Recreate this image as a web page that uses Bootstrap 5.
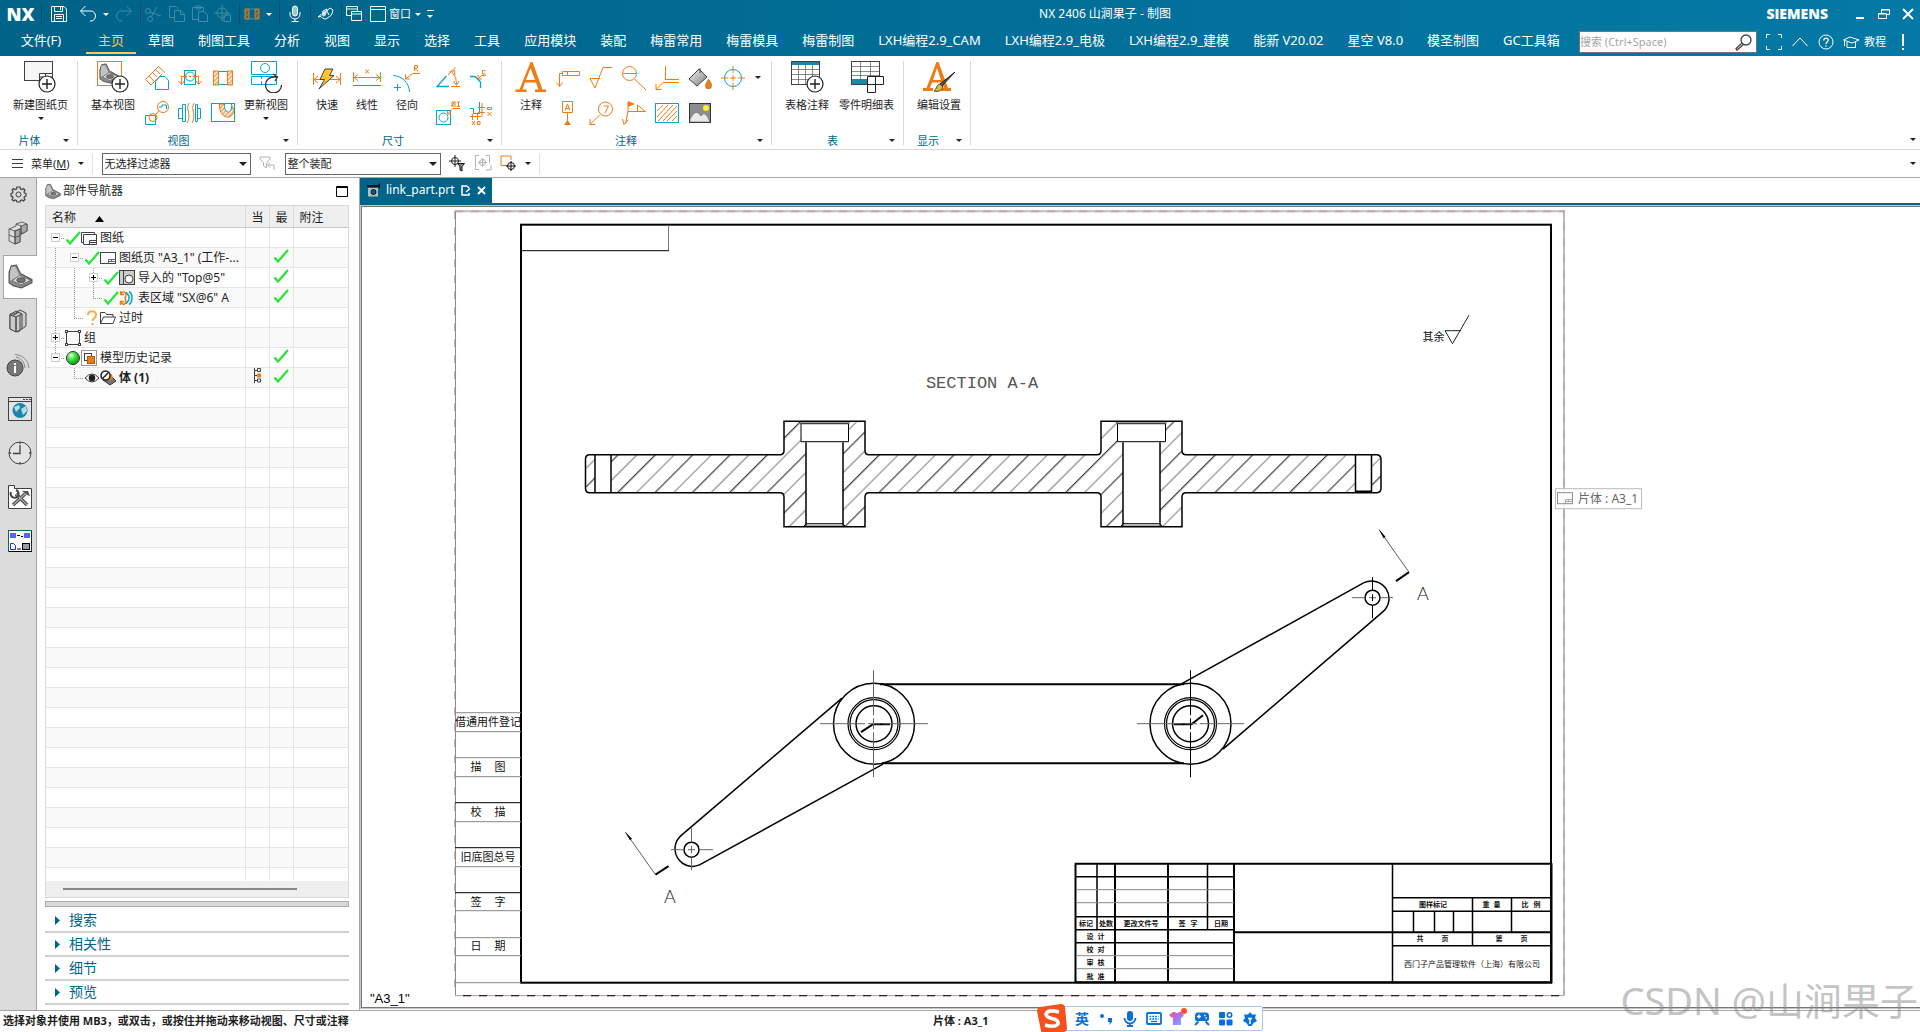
<!DOCTYPE html>
<html lang="zh-CN">
<head>
<meta charset="utf-8">
<meta name="viewport" content="width=device-width, initial-scale=1">
<title>NX 2406 山涧果子 - 制图</title>
<link href="https://cdn.jsdelivr.net/npm/bootstrap@5.3.0/dist/css/bootstrap.min.css" rel="stylesheet">
<style>
:root{--or:#ee7b14;--cy:#00a6cc;--dk:#404040;--teal:#006489;--ln:#d9d9d9}
body{font-family:"Noto Sans","Noto Sans CJK SC",sans-serif;font-size:11px;line-height:16px;color:#1e1e1e;background:#fff;height:100vh;overflow:hidden}
.btn{--bs-btn-font-size:11px;--bs-btn-line-height:16px;--bs-btn-padding-x:0;--bs-btn-padding-y:0;--bs-btn-border-radius:0;--bs-btn-border-width:0;--bs-btn-color:#1e1e1e;display:inline-flex;align-items:center;justify-content:center;flex:none;white-space:nowrap}
svg{flex:none;display:block}
.ln{fill:none;stroke-width:1}
.o{stroke:var(--or)}.c{stroke:var(--cy)}.k{stroke:var(--dk)}.w{stroke:#fff}
.fo{fill:var(--or)}.fk{fill:#333}.fw{fill:#fff}
.appbar{background:linear-gradient(90deg,#006388,#0479a6)}
.titlerow{height:28px}
.titlerow .btn,.menurow .btn{color:#fff}
.titlerow .btn{height:26px}
.dim{opacity:.25}
.brandmark{width:41px;font:800 18px/26px "Open Sans",sans-serif;color:#fff;text-align:center}
.tsep{width:1px;height:20px;background:#004d6d;flex:none}
.b12{width:12px}.b18{width:18px}.b24{width:24px}.b23{width:23px}.b34{width:34px}.b30{width:30px}
.caret{width:0;height:0;border:4px solid transparent;border-top-color:currentColor;border-bottom:0;display:block}
.caret-s{border-width:3px;border-bottom:0}
.siemens{font:800 14px/24px "Open Sans",sans-serif;color:#fff;margin-right:20px}
.menurow{height:28px}
.menurow .nav-link{color:#fff;font-size:13px;line-height:18px;padding:3px 12px;border-bottom:2px solid transparent;white-space:nowrap}
.menurow .nav-link.active{color:#ffcb5c;border-color:#ffcb5c}
.filetab{width:86px}
.seek{width:178px;height:22px;background:#fff;border:1px solid #777}
.seek input{border:0;outline:0;width:140px;font-size:11px;padding:0;background:none}
.seek input::placeholder{color:#a5a5a5;opacity:1}
.ribbon{height:94px;border-bottom:1px solid var(--ln);padding-top:4px}
.rgroup{position:relative;padding:0 9px 0 12px}
.rgroup::after{content:"";position:absolute;right:0;top:1px;bottom:4px;width:1px;background:var(--ln)}
.rgroup.tight{padding:0 5px 0 9px}
.rbody{height:72px}
.rcap{height:17px;color:var(--teal)}
.big{flex-direction:column;justify-content:flex-start!important;padding:1px 1px 0!important}
.big .lab{margin-top:4px;height:16px}
.big .caret{margin-top:4px}
.big40{width:40px}
.small-grid{display:grid;grid-auto-flow:column;grid-template-rows:35px 35px;grid-auto-columns:33px}
.selbar{height:28px;border-bottom:1px solid #a5a5a5;padding-top:1px}
.selbar select{height:22px;border:1px solid #666;border-radius:0;background:#fff;font-size:11px;padding:0 0 0 2px;appearance:none;width:100%;color:#1e1e1e}
.selwrap{position:relative}
.selwrap .caret{position:absolute;right:4px;top:9px;pointer-events:none}
.selsep{height:20px;margin:0 9px 0 8px}
.rail{width:37px;background:#dcdcdc;border-right:1px solid #a5a5a5}
.rail .btn{height:44px;width:36px}
.rail .first{height:33px}
.rail .on{background:#fff;border:1px solid #a5a5a5;border-right:0;width:34px;margin-left:3px;position:relative}
.panel{width:323px;border-right:1px solid #a5a5a5;padding:0 10px 5px 8px}
.phead{height:27px;font-size:12px;padding-right:1px;gap:2px}
.gridbox{border:1px solid var(--ln);border-bottom:0;min-height:0}
.tree{table-layout:fixed;width:100%;font-size:12px;line-height:19px;margin:0;color:#1e1e1e;--bs-table-bg:transparent}
.tree th{height:22px;background:#efefef!important;font-weight:400;padding:0 0 0 6px;border:0;border-right:1px solid var(--ln);border-bottom:1px solid #c8c8c8;white-space:nowrap;overflow:hidden}
.tree td{height:20px;padding:0;border:0;border-right:1px solid #e6e6e6;border-bottom:1px solid #e6e6e6;overflow:hidden;white-space:nowrap}
.tree tr>:last-child{border-right:0}
.tree tbody tr:nth-child(even) td{background:#f9f9f9}
.tree .cell{display:flex;align-items:center;height:19px}
.gd{width:19px;height:19px;flex:none;position:relative}
.st{width:16px;flex:none}
.txt{margin-left:3px}
/* dotted connectors of the tree */
.v{background:repeating-linear-gradient(#999 0 1px,transparent 1px 2px) 9px 0/1px 100% no-repeat}
.vh{background:repeating-linear-gradient(#999 0 1px,transparent 1px 2px) 9px 0/1px 10px no-repeat,repeating-linear-gradient(90deg,#999 0 1px,transparent 1px 2px) 9px 10px/10px 1px no-repeat}
.vth{background:repeating-linear-gradient(#999 0 1px,transparent 1px 2px) 9px 0/1px 100% no-repeat,repeating-linear-gradient(90deg,#999 0 1px,transparent 1px 2px) 9px 10px/10px 1px no-repeat}
.ht{background:repeating-linear-gradient(90deg,#999 0 1px,transparent 1px 2px) 9px 10px/10px 1px no-repeat}
.tg{position:absolute;left:5px;top:5px;width:9px;height:9px;background:#fff;border:1px solid #ccc;padding:0}
.tg::before{content:"";position:absolute;left:1px;right:1px;top:3px;height:1px;background:#000}
.tg.plus::after{content:"";position:absolute;top:1px;bottom:1px;left:3px;width:1px;background:#000}
.hscroll{height:17px;background:#efefef;border:1px solid var(--ln);border-top:0;padding:7px 0 0 17px}
.hscroll div{width:234px;height:2px;background:#868686}
.splitter{height:6px;margin-top:3px;background:#d9d9d9;border:1px solid #ababab}
.sect{height:24px;width:100%;border-bottom:2px solid #d0d0d0!important;justify-content:flex-start!important;color:var(--teal)!important;font-size:14px!important;line-height:20px!important;padding-left:10px!important;gap:9px}
.sect svg{fill:var(--teal)}
.doctab{background:var(--teal);color:#fff;font-size:12px;height:25px;padding:0 6px 0 7px;gap:6px}
.strip{height:3px;background:var(--teal)}
.sheet{min-height:0;border:1px solid #777;border-right:0;outline:1px solid #c4c4c4;margin-left:1px}
.status{height:22px;border-top:1px solid #a5a5a5;font-weight:700;padding:2px 3px 0;position:relative}
.status .mid{position:absolute;left:933px;top:2px}
.ime{position:absolute;left:1047px;bottom:1px;width:216px;height:25px;background:#fff;border:1px solid #a9c8ee;border-radius:2px;padding-left:22px}
.ime .btn{width:24px;height:23px;color:#0a6fd8}
.imelogo{position:absolute;left:-12px;top:-4px}
.wm{position:absolute;right:2px;bottom:6px;font-size:38px;line-height:52px;color:#8a8a8a;opacity:.5;font-weight:400;pointer-events:none;white-space:nowrap}
.cad{font-family:"Noto Sans CJK SC",sans-serif;font-weight:400;fill:#111;text-anchor:middle}
</style>
<script src="https://cdn.jsdelivr.net/npm/bootstrap@5.3.0/dist/js/bootstrap.bundle.min.js"></script>
</head>
<body class="d-flex flex-column">
<svg width="0" height="0" class="position-absolute" aria-hidden="true">
<defs>
<linearGradient id="gr" x1="0" y1="0" x2="1" y2="1"><stop offset="0" stop-color="#f4f4f4"/><stop offset="1" stop-color="#7d7d7d"/></linearGradient>
<linearGradient id="pk" x1="0" y1="0" x2="1" y2="1"><stop offset="0" stop-color="#ff5a5a"/><stop offset=".5" stop-color="#a970ff"/><stop offset="1" stop-color="#5ec8ff"/></linearGradient>
<radialGradient id="gn" cx=".35" cy=".3" r=".8"><stop offset="0" stop-color="#d6ffd6"/><stop offset=".5" stop-color="#2fd62f"/><stop offset="1" stop-color="#0d8a0d"/></radialGradient>
<symbol id="ok" viewBox="0 0 16 16"><path d="M1.500 9.500 5 13.500 15 2" fill="none" stroke="#25e43a" stroke-width="2.200"/></symbol>
<symbol id="part" viewBox="0 0 24 24"><path d="M3 2 8 1 12 9 23 15V18L13 23 5 21 1 18V8Z" fill="#8b8b8b" stroke="#4c4c4c"/><path d="M3 3 7 2.500 11 11 4 15 2 16V8Z" fill="#c4c4c4"/><path d="M4 16 11 11 22 15.500 12.500 20Z" fill="#dedede" stroke="#555" stroke-width=".7"/><ellipse cx="12.500" cy="15.500" rx="4" ry="2.200" fill="#777" stroke="#333" stroke-width=".7"/></symbol>
<symbol id="sheet" viewBox="0 0 16 16"><rect x=".5" y="2.500" width="15" height="11" fill="#fdfdfd" stroke="#444"/><path d="M8.500 13V9.500H15M8.500 11.500H15M11.500 9.500V11.500" fill="none" stroke="#444" stroke-width=".8"/></symbol>
<symbol id="plusdisc" viewBox="0 0 18 18"><circle cx="9" cy="9" r="8" fill="#fff" stroke="#222" stroke-width="1.200"/><path d="M9 4V14M4 9H14" stroke="#222" stroke-width="1.400"/></symbol>
<pattern id="hat" width="26.400" height="26.400" patternUnits="userSpaceOnUse" patternTransform="translate(651.200 449.600) rotate(45)"><path d="M6.600 0V26.400" stroke="#111" stroke-width="1"/><path d="M19.800 0V26.400" stroke="#777" stroke-width="1"/></pattern>
<pattern id="oh" width="3" height="3" patternUnits="userSpaceOnUse" patternTransform="rotate(45)"><path d="M1 0V3" stroke="#ee7b14" stroke-width="1.200"/></pattern>
</defs>
</svg>

<header class="appbar">
 <div class="titlerow d-flex align-items-center position-relative">
  <span class="brandmark">NX</span><i class="tsep"></i>
  <button class="btn b34" aria-label="保存"><svg width="18" height="18" viewBox="0 0 18 18"><g class="ln w"><path d="M1.500 1.500H14L16.500 4V16.500H1.500ZM4.500 1.500V6.500H12.500V1.500M10.500 2V5M4.500 16V9.500H13.500V16M6 11.500H12M6 13.500H12"/></g></svg></button>
  <button class="btn b24" aria-label="撤销"><svg width="18" height="18" viewBox="0 0 18 18"><path class="ln w" stroke-width="1.400" d="M6.500 1 1.500 6 6.500 11M2 6H12A4.500 5 0 0 1 12 16H11"/></svg></button>
  <button class="btn b12" aria-label="撤销列表"><i class="caret caret-s"></i></button>
  <button class="btn b24" aria-label="重做"><svg class="dim" width="18" height="18" viewBox="0 0 18 18"><path class="ln w" d="M11.500 1 16.500 6 11.500 11M16 6H6A4.500 5 0 0 0 6 16H7"/></svg></button>
  <i class="tsep ms-1"></i>
  <button class="btn b24" aria-label="剪切"><svg class="dim" width="18" height="18" viewBox="0 0 18 18"><g class="ln w"><circle cx="4" cy="6" r="2.500"/><circle cx="6" cy="14" r="2.500"/><path d="M6 7 17 11M7 12 13 2"/></g></svg></button>
  <button class="btn b23" aria-label="复制"><svg class="dim" width="18" height="18" viewBox="0 0 18 18"><path class="ln w" d="M6 12.500H1.500V1.500H8L11 4.500M6.500 5.500H12.500L16.500 9V16.500H6.500ZM12.500 5.500V9.500H16.500"/></svg></button>
  <button class="btn b23" aria-label="粘贴"><svg class="dim" width="18" height="18" viewBox="0 0 18 18"><path class="ln w" d="M7 14.500H1.500V2.500H12.500V6M4.500 2.500V1H9.500V4H4.500M7.500 6.500H13L16.500 10V16.500H7.500Z"/></svg></button>
  <button class="btn b24" aria-label="定位"><svg class="dim" width="18" height="18" viewBox="0 0 18 18"><g class="ln w"><circle cx="8" cy="8" r="5"/><path d="M8 0V16M0 8H16M10 10H16.500V16.500H10Z"/></g></svg></button>
  <i class="tsep ms-1"></i>
  <button class="btn b23" aria-label="剖视图"><svg width="16" height="12" viewBox="0 0 16 12"><rect x="1" y="1" width="4" height="10" fill="url(#oh)" class="o"/><rect x="11" y="1" width="4" height="10" fill="url(#oh)" class="o"/><path d="M5.500 1H10.500M5.500 11H10.500" class="ln c"/></svg></button>
  <button class="btn b12" aria-label="更多"><i class="caret caret-s"></i></button>
  <i class="tsep ms-1"></i>
  <button class="btn b30" aria-label="语音"><svg width="14" height="18" viewBox="0 0 14 18"><g class="ln w"><rect x="4.500" y="1" width="5" height="10" rx="2.500" fill="#9cc" /><path d="M2 7V9A5 5 0 0 0 12 9V7M7 14V17M3.500 16.500H10.500"/></g></svg></button>
  <i class="tsep"></i>
  <button class="btn b30" aria-label="触控"><svg width="18" height="14" viewBox="0 0 18 14"><path d="M1 10 4 7.500 5 8.500 6 4 10 2 9.500 4 13 1 16 3 14.500 8 9 12 6 11.500 4 9.500Z" class="ln w"/><path d="M6 5 10 3 9 8 6 10Z" fill="#cfe3ec"/><path class="ln w" d="M10 4 12 8"/></svg></button>
  <i class="tsep"></i>
  <button class="btn b24" aria-label="层叠窗口"><svg width="18" height="18" viewBox="0 0 18 18"><path class="ln w" d="M6 10.500H1.500V1.500H12.500V6M1.500 4H12M6.500 6.500H16.500V15.500H6.500ZM6.500 9H16.500"/></svg></button>
  <button class="btn b23" aria-label="窗口图标"><svg width="18" height="18" viewBox="0 0 18 18"><path class="ln w" d="M1.500 1.500H16.500V16.500H1.500ZM1.500 4.500H16.500"/></svg></button>
  <button class="btn gap-1">窗口 <i class="caret caret-s"></i></button>
  <button class="btn b18 flex-column gap-1" aria-label="自定义"><i style="width:7px;height:1px;background:#fff"></i><i class="caret caret-s"></i></button>
  <div class="position-absolute start-50 translate-middle-x text-white" style="font-size:12px;margin-left:145px">NX 2406 山涧果子 - 制图</div>
  <div class="ms-auto d-flex align-items-center">
   <span class="siemens">SIEMENS</span>
   <button class="btn b24" aria-label="最小化"><svg width="12" height="12" viewBox="0 0 12 12"><path class="w" stroke-width="2" d="M2 10H10"/></svg></button>
   <button class="btn b24" aria-label="还原"><svg width="12" height="12" viewBox="0 0 12 12"><path class="ln w" d="M.500 5.500H8.500V10.500H.500ZM3.500 5V1.500H11.500V6.500H9M.500 6H8M3.500 2H11"/></svg></button>
   <button class="btn b24" aria-label="关闭"><svg width="12" height="12" viewBox="0 0 12 12"><path class="w" stroke-width="1.800" d="M1 1 11 11M11 1 1 11"/></svg></button>
  </div>
 </div>
 <nav class="menurow d-flex">
  <ul class="nav flex-nowrap">
   <li><a class="nav-link filetab text-center pe-3" href="#">文件(F)</a></li>
   <li><a class="nav-link active" href="#">主页</a></li><li><a class="nav-link" href="#">草图</a></li><li><a class="nav-link" href="#">制图工具</a></li><li><a class="nav-link" href="#">分析</a></li><li><a class="nav-link" href="#">视图</a></li><li><a class="nav-link" href="#">显示</a></li><li><a class="nav-link" href="#">选择</a></li><li><a class="nav-link" href="#">工具</a></li><li><a class="nav-link" href="#">应用模块</a></li><li><a class="nav-link" href="#">装配</a></li><li><a class="nav-link" href="#">梅雷常用</a></li><li><a class="nav-link" href="#">梅雷模具</a></li><li><a class="nav-link" href="#">梅雷制图</a></li><li><a class="nav-link" href="#">LXH编程2.9_CAM</a></li><li><a class="nav-link" href="#">LXH编程2.9_电极</a></li><li><a class="nav-link" href="#">LXH编程2.9_建模</a></li><li><a class="nav-link" href="#">能新 V20.02</a></li><li><a class="nav-link" href="#">星空 V8.0</a></li><li><a class="nav-link" href="#">模圣制图</a></li><li><a class="nav-link" href="#">GC工具箱</a></li>
  </ul>
  <div class="ms-auto d-flex align-items-center">
   <div class="seek d-flex align-items-center justify-content-between pe-1"><input type="text" placeholder="搜索 (Ctrl+Space)" aria-label="搜索"><svg width="17" height="17" viewBox="0 0 17 17"><g class="ln k"><circle cx="11" cy="6" r="5" stroke-width="1.300"/><path stroke-width="1.300" d="M7 9 1 14.500 2 16 8.500 10.500"/></g></svg></div>
   <button class="btn b34" aria-label="全屏"><svg width="18" height="18" viewBox="0 0 18 18"><path class="ln w" stroke-width="1.300" d="M1.500 5V1.500H5M13 1.500H16.500V5M16.500 13V16.500H13M5 16.500H1.500V13"/></svg></button>
   <button class="btn" aria-label="收起功能区"><svg width="18" height="18" viewBox="0 0 18 18"><path class="ln w" stroke-width="1.400" d="M1.500 13 9 5 16.500 13"/></svg></button>
   <button class="btn b34" aria-label="帮助"><svg width="16" height="16" viewBox="0 0 16 16"><g class="ln w"><circle cx="8" cy="8" r="7"/><path stroke-width="1.300" d="M5.800 6.500C5.800 3.200 10.200 3.500 10.200 6 10.200 8 8 7.800 8 10M8 11.200V12.500"/></g></svg></button>
   <button class="btn gap-1"><svg width="17" height="13" viewBox="0 0 17 13"><path class="ln w" d="M.500 4 7 1 16 4 9 7ZM4 6V11.500H12.500V6M1.500 5V10"/></svg>教程</button>
   <button class="btn b34" aria-label="提醒"><svg width="4" height="18" viewBox="0 0 4 18"><path class="w" stroke-width="2" d="M2 1V13M2 15V17"/></svg></button>
  </div>
 </nav>
</header>

<section class="ribbon d-flex">
 <div class="rgroup">
  <div class="rbody d-flex gap-1">
   <button class="btn big"><svg width="34" height="32" viewBox="0 0 34 32"><rect x=".500" y=".500" width="28" height="19" fill="#f6f6f6" class="k"/><path class="ln k" d="M15.500 19V12.500H28M15.500 16H28M21.500 12.500V16"/><use href="#plusdisc" x="14" y="14" width="18" height="18"/></svg><span class="lab">新建图纸页</span><i class="caret caret-s"></i></button>
  </div>
  <div class="rcap d-flex align-items-center"><span class="flex-grow-1 text-center pe-3">片体</span><i class="caret caret-s text-dark"></i></div>
 </div>
 <div class="rgroup">
  <div class="rbody d-flex gap-1">
   <button class="btn big"><svg width="34" height="32" viewBox="0 0 34 32"><rect x="1.500" y=".500" width="24" height="24" fill="#fff" class="o"/><use href="#part" x="3" y="2" width="21" height="21"/><use href="#plusdisc" x="15" y="14" width="18" height="18"/></svg><span class="lab">基本视图</span></button>
   <div class="small-grid">
    <button class="btn" aria-label="投影视图"><svg width="24" height="24" viewBox="0 0 24 24"><g class="ln"><path class="o" d="M.500 13.500 13.500 .500 20 6.500M.500 13.500 6 19 17 8M4 10 9 15M8 7 12 11M11 4 15 8"/><path class="c" d="M10.500 15.500 15 10.500H20L23.500 14.500V23.500H10.500Z"/></g></svg></button>
    <button class="btn" aria-label="局部放大图"><svg width="24" height="24" viewBox="0 0 24 24"><g class="ln"><path class="c" d="M.500 14.500H10.500V23.500H.500Z"/><circle class="o" cx="8" cy="16.500" r="4"/><circle class="o" cx="18" cy="6" r="5.500"/><path class="o" d="M10.500 13.500 14 10"/><path class="c" d="M14 6H17V4H21.500V8"/></g></svg></button>
    <button class="btn" aria-label="剖切线"><svg width="24" height="24" viewBox="0 0 24 24"><g class="ln"><rect class="c" x="6.500" y="4.500" width="11" height="14"/><circle class="c" cx="12" cy="10.500" r="4.500"/><path class="o" d="M3.500 18V10.500H9M15 10.500H20.500V18M.500 15 3.500 18.500 6 15M18 15 20.500 18.500 23.500 15M11 10.500H13"/></g></svg></button>
    <button class="btn" aria-label="断开视图"><svg width="24" height="24" viewBox="0 0 24 24"><g class="ln"><path class="c" d="M.500 7.500H4.500V17.500H.500ZM4.500 3.500H7.500V20.500H4.500ZM17.500 3.500H19.500V20.500H17.500ZM19.500 7.500H22.500V17.500H19.500Z"/><path class="o" d="M11 2C7 8 14 14 9 22M16 2C12 8 19 14 14 22"/></g></svg></button>
    <button class="btn" aria-label="剖视图"><svg width="22" height="18" viewBox="0 0 22 18"><rect x="1.500" y="2" width="5" height="14" fill="url(#oh)" class="o"/><rect x="15.500" y="2" width="5" height="14" fill="url(#oh)" class="o"/><path d="M7 2.500H15M7 15.500H15" class="ln c"/></svg></button>
    <button class="btn" aria-label="局部剖视图"><svg width="24" height="20" viewBox="0 0 24 20"><path fill="url(#oh)" class="o" d="M8.500 1C8 9 12 15 18 14 21 13 23 10 23 7L20 1Z"/><path fill="#fff" class="c" d="M13.500 .500C13 6 15 9 17.500 9 20 9 21 5 20.500 .500Z"/><rect class="ln c" x=".500" y=".500" width="23" height="18"/></svg></button>
   </div>
   <button class="btn big"><svg width="34" height="32" viewBox="0 0 34 32"><g class="ln"><path class="c" d="M2.500 .500H27.500V13.500H2.500ZM2.500 15.500H27.500V23.500H2.500Z"/><circle class="c" cx="16" cy="7" r="4.500"/><path class="c" stroke-dasharray="3 2" d="M12.500 15V24"/></g><path d="M24 13 28.500 16 26 20M28 16H25A8 8 0 1 0 32.500 24" fill="none" stroke="#333" stroke-width="1.300"/></svg><span class="lab">更新视图</span><i class="caret caret-s"></i></button>
  </div>
  <div class="rcap d-flex align-items-center"><span class="flex-grow-1 text-center pe-3">视图</span><i class="caret caret-s text-dark"></i></div>
 </div>
 <div class="rgroup tight">
  <div class="rbody d-flex">
   <button class="btn big big40"><svg width="30" height="32" viewBox="0 0 30 32"><path class="ln o" stroke-width="1.200" d="M1.500 12V24M28.500 12V24M2 18.500H28M6 15 2 18.500 6 22M24 15 28 18.500 24 22"/><path d="M13 8H21L17.500 14.500H22L7 28 12.500 18.500H8Z" fill="#fdc62e" stroke="#444"/></svg><span class="lab">快速</span></button>
   <button class="btn big big40"><svg width="30" height="32" viewBox="0 0 30 32"><path class="ln o" stroke-width="1.200" d="M1.500 11V21M28.500 11V21M2 16.500H28M6 13.500 2 16.500 6 19.500M24 13.500 28 16.500 24 19.500M13.500 8.500 17 12.500M17 8.500 13.500 12.500"/><path class="ln c" stroke-width="1.200" d="M1 24.500H29"/></svg><span class="lab">线性</span></button>
   <button class="btn big big40"><svg width="30" height="32" viewBox="0 0 30 32"><path class="ln c" stroke-width="1.200" d="M1 14.500C10 15 17 21 17.500 31M2 26.500H9M5.500 23V30"/><path class="ln o" d="M28 12.500H20.500L13.500 18M13.500 13.500V18H18M22.500 10V4.500H25.500V7H22.500L26 10"/></svg><span class="lab">径向</span></button>
   <div class="small-grid ms-1">
    <button class="btn" aria-label="角度尺寸"><svg width="24" height="24" viewBox="0 0 24 24"><g class="ln"><path class="c" stroke-width="1.300" d="M10.500 10 1 20.500H13"/><path class="o" d="M12 9 19.500 1M15 20.500H24M13.500 6 18.500 4.500 19 9M16 6Q21 11 20.500 18M17.500 15 20.500 19.500 23 15"/></g></svg></button>
    <button class="btn" aria-label="孔尺寸"><svg width="24" height="24" viewBox="0 0 24 24"><g class="ln"><rect class="c" x=".500" y="9.500" width="14" height="14"/><circle class="c" cx="7.500" cy="16.500" r="4.500"/><path class="o" d="M24 7.500H17L11.500 13M11.500 9.500V13H15M15.500 5.500 19 .500M16 1H19V5H16ZM21 1H24M22.500 1V5.500M21 5.500H24"/></g></svg></button>
    <button class="btn" aria-label="倒斜角尺寸"><svg width="24" height="24" viewBox="0 0 24 24"><g class="ln"><path class="c" stroke-width="1.300" d="M1 10.500H6L11.500 16V22"/><path class="o" d="M17 9.500H12.500L9.500 12.500M9 9V13H13M16.500 4.500H13.500V8H16.500"/></g></svg></button>
    <button class="btn" aria-label="坐标尺寸"><svg width="24" height="24" viewBox="0 0 24 24"><g class="ln"><path class="c" d="M.500 7.500H4.500V12.500H10.500V1"/><path class="o" d="M9 6.500H16M9 11.500H16M13 2V16M1 15.500H12M3.500 13V19M8.500 13V19M3 20 6 24M6 20 3 24M8.500 20.500H11V23.500H8.500ZM18.500 6.500H22.500V8.500H18.500ZM18.500 11 22.500 15M22.500 11 18.500 15"/></g></svg></button>
   </div>
  </div>
  <div class="rcap d-flex align-items-center"><span class="flex-grow-1 text-center pe-2">尺寸</span><i class="caret caret-s text-dark me-1"></i></div>
 </div>
 <div class="rgroup tight">
  <div class="rbody d-flex">
   <button class="btn big big40"><svg width="32" height="32" viewBox="0 0 32 32"><path class="fo" d="M15.500 1H17.500L27.500 28.500H31V31H20V28.500H23.500L21 21.500H10L7.500 28.500H11.500V31H.500V28.500H4.500ZM15.500 7 11 19H20Z"/></svg><span class="lab">注释</span></button>
   <div class="small-grid">
    <button class="btn" aria-label="特征控制框"><svg width="24" height="24" viewBox="0 0 24 24"><path class="ln o" stroke-width="1.200" d="M6.500 5.500H23.500V9.500H6.500ZM11.500 5.500V9.500M6.500 7.500H3.500V20M.500 16.500 3.500 20.500 6.500 16.500"/></svg></button>
    <button class="btn" aria-label="基准特征符号"><svg width="24" height="24" viewBox="0 0 24 24"><path class="ln o" stroke-width="1.200" d="M6.500 .500H16.500V11.500H6.500ZM11.500 12V20M9 9.500 11.500 3 14 9.500M10 7.500H13"/><path class="fo" d="M11.500 19 15 24H8Z"/></svg></button>
    <button class="btn" aria-label="表面粗糙度"><svg width="24" height="24" viewBox="0 0 24 24"><path class="ln o" stroke-width="1.400" d="M1 12.500H11M1 12.500 6 22 14 1.500H23"/></svg></button>
    <button class="btn" aria-label="符号标注"><svg width="24" height="24" viewBox="0 0 24 24"><path class="ln o" stroke-width="1.200" d="M11 13.500 1 23.500M1 18V23.500H6.500M14.500 5H19.500L16 12"/><circle class="ln o" stroke-width="1.200" cx="16.500" cy="8" r="7"/></svg></button>
    <button class="btn" aria-label="目标点"><svg width="24" height="24" viewBox="0 0 24 24"><circle class="ln o" stroke-width="1.200" cx="7.500" cy="7.500" r="7"/><path class="ln o" stroke-width="1.400" d="M1 7.500H14M12.500 13 24 24"/></svg></button>
    <button class="btn" aria-label="焊接符号"><svg width="24" height="24" viewBox="0 0 24 24"><path class="ln o" stroke-width="1.200" d="M3.500 23 6 10.500H23.500L15.500 4V10.500M6 10.500V1M.500 18 2 23.500 6 19"/><path class="fo" d="M6 0 13 3 6 6Z"/></svg></button>
    <button class="btn" aria-label="相交符号"><svg width="24" height="24" viewBox="0 0 24 24"><path class="ln o" stroke-width="1.200" d="M10.500 0V13.500H24M24 16.500H8L1 23.500M1 18V23.500H6.500"/></svg></button>
    <button class="btn" aria-label="剖面线"><svg width="24" height="20" viewBox="0 0 24 20"><rect class="ln c" x=".500" y=".500" width="23" height="19" stroke-width="1.300"/><path class="ln o" stroke-width="1.300" d="M2 8 8 2M2 14 13 2M3 18 18 2M8 18 22 3M12 18 22 8M17 18 22 13"/></svg></button>
    <button class="btn" aria-label="区域填充"><svg width="24" height="22" viewBox="0 0 24 22"><path d="M1 12 11 2 19 10 9 19Z" fill="url(#gr)" stroke="#444"/><path d="M12 1V6" stroke="#444"/><path class="fo" stroke="#a85a10" stroke-width=".500" d="M20.500 12C23 16 24 17 23.500 19A3 3 0 0 1 17.500 19C17 17 19 15 20.500 12Z"/></svg></button>
    <button class="btn" aria-label="图像"><svg width="22" height="20" viewBox="0 0 22 20"><rect x=".500" y=".500" width="21" height="19" fill="#8d8d8d" stroke="#333"/><circle cx="17" cy="5" r="3" fill="#ffef2e"/><path d="M1 16Q7 4 12 13 16 6 21 19H1Z" fill="#e8e8ee" stroke="#555" stroke-width=".600"/></svg></button>
    <button class="btn" aria-label="中心标记"><svg width="24" height="24" viewBox="0 0 24 24"><circle class="ln c" stroke-width="1.300" cx="12" cy="12" r="8.500"/><path class="ln o" stroke-width="1.400" d="M12 0V7M12 9V15M12 17V24M0 12H7M9 12H15M17 12H24"/></svg></button>
   </div>
   <button class="btn align-self-start pt-3 b18" aria-label="更多注释"><i class="caret caret-s"></i></button>
  </div>
  <div class="rcap d-flex align-items-center"><span class="flex-grow-1 text-center pe-3">注释</span><i class="caret caret-s text-dark me-1"></i></div>
 </div>
 <div class="rgroup">
  <div class="rbody d-flex gap-2">
   <button class="btn big"><svg width="34" height="32" viewBox="0 0 34 32"><rect x="1.500" y=".500" width="28" height="23" fill="#fff" class="k"/><rect x="2" y="1" width="27" height="3" fill="#1b86a8"/><path class="ln k" opacity=".6" d="M2 8.500H29M2 13.500H29M2 18.500H29M8.500 4V23M15.500 4V23M22.500 4V23"/><use href="#plusdisc" x="16" y="14" width="18" height="18"/></svg><span class="lab">表格注释</span></button>
   <button class="btn big"><svg width="34" height="32" viewBox="0 0 34 32"><rect x="1.500" y=".500" width="28" height="23" fill="#fff" class="k"/><rect x="2" y="18" width="27" height="5" fill="#1b86a8"/><path class="ln k" opacity=".6" d="M2 5.500H29M2 10.500H29M2 14.500H29M10.500 1V18M20.500 1V18"/><path d="M17.500 15.500H33.500V23.500H25.500V31.500H17.500Z" fill="#fff" stroke="#222"/><path d="M25.500 15.500V23.500H17.500" fill="none" stroke="#222"/></svg><span class="lab">零件明细表</span></button>
  </div>
  <div class="rcap d-flex align-items-center"><span class="flex-grow-1 text-center pe-2">表</span><i class="caret caret-s text-dark"></i></div>
 </div>
 <div class="rgroup">
  <div class="rbody d-flex gap-1">
   <button class="btn big"><svg width="34" height="32" viewBox="0 0 34 32"><path class="fo" d="M14.500 1H16.500L26 27H29V30H19V27H22L20 21.500H10L8 27H11V30H1V27H4.500ZM15 7 11 19H19Z"/><path d="M33 11 20 25 18 23Z" fill="#555" stroke="#222"/><path d="M18 23 21 26C20 30 16 31 12 30 15 28 14 24 18 23Z" fill="#e0b64a" stroke="#5a4512"/></svg><span class="lab">编辑设置</span></button>
  </div>
  <div class="rcap d-flex align-items-center"><span class="flex-grow-1 text-center pe-3">显示</span><i class="caret caret-s text-dark"></i></div>
 </div>
 <button class="btn ms-auto align-self-end mb-2 px-1" aria-label="功能区选项"><i class="caret caret-s me-0"></i></button>
</section>

<section class="selbar d-flex align-items-center">
 <button class="btn ps-2 ms-1 gap-2"><svg width="11" height="9" viewBox="0 0 11 9"><path class="k" d="M0 .500H11M0 4.500H11M0 8.500H11"/></svg><span>菜单(<u>M</u>)</span><i class="caret caret-s"></i></button>
 <span class="border-start selsep"></span>
 <div class="selwrap" style="width:149px"><select aria-label="选择过滤器"><option>无选择过滤器</option></select><i class="caret"></i></div>
 <button class="btn b34" aria-label="重置过滤器"><svg width="17" height="16" viewBox="0 0 17 16" opacity=".4"><path class="ln k" stroke-width="1.200" d="M1 1H11V3L7.500 7V12L4.500 10V7L1 3ZM15 14V9H9M11 6.500 8.500 9 11 11.500"/></svg></button>
 <div class="selwrap" style="width:156px"><select aria-label="选择范围"><option>整个装配</option></select><i class="caret"></i></div>
 <button class="btn b34" aria-label="常规选择"><svg width="18" height="17" viewBox="0 0 18 17"><g class="ln"><circle cx="6" cy="6" r="3.500" stroke="#222"/><path stroke="#222" d="M6 0V12M0 6H12"/></g><path d="M8.500 8.500H15.500L13 11.500V16L11 15V11.500Z" fill="#888" stroke="#111"/></svg></button>
 <button class="btn" aria-label="框选"><svg width="17" height="17" viewBox="0 0 17 17" opacity=".4"><g class="ln k"><path d="M4 .500H.500V14.500H4M11 .500H14.500V8M16 10V15H11"/><circle cx="7.500" cy="7.500" r="3"/><path d="M7.500 3V12M3 7.500H12"/></g></svg></button>
 <button class="btn ms-2" aria-label="捕捉"><svg width="17" height="17" viewBox="0 0 17 17"><path class="ln o" stroke-width="1.300" d="M7 10.500H1V1H11V5"/><g class="ln" stroke="#111"><circle cx="11" cy="11" r="3.500"/><path d="M11 6V16M6 11H16"/></g></svg></button>
 <button class="btn ms-2" aria-label="捕捉选项"><i class="caret caret-s"></i></button>
 <span class="border-start ms-2 selsep"></span>
 <button class="btn ms-auto px-1" aria-label="工具条选项"><i class="caret caret-s"></i></button>
</section>

<main class="d-flex flex-grow-1" style="min-height:0">
 <nav class="rail d-flex flex-column flex-shrink-0">
  <button class="btn first" aria-label="设置"><svg width="17" height="17" viewBox="0 0 17 17"><g class="ln k"><path stroke-width="1.200" d="M7 1H10L10.500 3 12 3.500 13.500 2.500 15 4 14 6 14.500 7 16 7.500V10L14.500 10.500 14 12 15 13.500 13.500 15 12 14 10.500 14.500 10 16H7L6.500 14.500 5 14 3.500 15 2 13.500 3 12 2.500 10.500 1 10V7.500L2.500 7 3 5.500 2 4 3.500 2.500 5 3.500 6.500 3Z"/><circle cx="8.500" cy="8.500" r="2.500"/></g></svg></button>
  <button class="btn" aria-label="装配导航器"><svg width="20" height="24" viewBox="0 0 20 24"><g stroke="#444" stroke-width=".800"><path fill="#ddd" d="M1 8 8 5 8 3 14 1 19 3V10L12 14V21L7 23 1 20Z"/><path fill="#aaa" d="M7 10 12 8V21L7 23ZM13 5 19 3V10L13 13Z"/><path fill="none" d="M1 8 7 10 12 8M8 3 13 5V13M1 14 7 16.500 12 14.500M7 10V23"/></g></svg></button>
  <button class="btn on" aria-label="部件导航器"><svg width="25" height="25"><use href="#part"/></svg></button>
  <button class="btn" aria-label="重用库"><svg width="18" height="24" viewBox="0 0 18 24"><g fill="#ccc" stroke="#444"><path d="M5 5 11 1 17 4V17L9 23 1 20V5Z"/><path d="M1 6 7 8V23L1 20ZM7 8 11 6V21L7 23Z"/><path fill="none" d="M1 5.500 7 2 13 5 11 6M4 6.500 10 3M13 5V20"/></g></svg></button>
  <button class="btn" aria-label="HD3D 工具"><svg width="24" height="24" viewBox="0 0 24 24"><circle cx="9" cy="15" r="8" fill="#777" stroke="#444"/><path d="M9 13V20M9 10V12" stroke="#fff" stroke-width="2"/><g class="ln" stroke="#888" stroke-width="1.200"><path d="M10 4A11 11 0 0 1 19 15M9 1.500A14 14 0 0 1 23 15M12 7A8 8 0 0 1 17 12"/></g></svg></button>
  <button class="btn" aria-label="Web 浏览器"><svg class="ms-1" width="24" height="24" viewBox="0 0 24 24"><rect x=".500" y=".500" width="23" height="23" fill="#e4e4e4" class="k"/><path class="k" d="M0 4.500H24M15 2.500H17M18 2.500H20M21 2.500H23"/><circle cx="12" cy="13.500" r="7.500" fill="#1b86a8"/><path d="M6 10 11 8 12 11 8 15ZM13 12 18 9 19 14 15 18Z" fill="#b9dcea"/></svg></button>
  <button class="btn" aria-label="历史记录"><svg class="ms-1" width="24" height="24" viewBox="0 0 24 24"><g class="ln k"><circle cx="12" cy="12" r="11" fill="#e4e4e4"/><path stroke-width="1.300" d="M12 4V12.500H5M12 1V3M12 21V23M1 12H3M21 12H23"/></g></svg></button>
  <button class="btn" aria-label="加工向导"><svg class="ms-1" width="24" height="24" viewBox="0 0 24 24"><path fill="#fff" class="k" d="M.500 23.500V.500H6.500V3.500H23.500V23.500Z"/><path d="M5 20 17 9M19 20 8 9" stroke="#444" stroke-width="3.400"/><path d="M5 20 17 9M19 20 8 9" stroke="#aaa" stroke-width="1.400"/><path d="M3 7A4 4 0 1 0 8 5" fill="none" stroke="#444" stroke-width="2"/><path d="M14 6 20 6 22 11 19 10Z" fill="#555"/></svg></button>
  <button class="btn" aria-label="角色"><svg class="ms-1" width="24" height="22" viewBox="0 0 24 22"><rect x=".500" y=".500" width="23" height="21" fill="#fff" stroke="#0a6464"/><path d="M24 1V21.500H1" fill="none" stroke="#000"/><g fill="#5b63e8"><rect x="2" y="3" width="6" height="5"/><rect x="16" y="3" width="6" height="5"/></g><path d="M9 5.500H12M13 6.500H15M9 19H13" stroke="#000"/><path d="M2.500 13.500H5.500L7.500 15.500V19.500H2.500Z" fill="#fff" stroke="#23c"/><rect x="14.500" y="13.500" width="7" height="6" fill="#99a" stroke="#000"/></svg></button>
 </nav>

 <aside class="panel d-flex flex-column flex-shrink-0">
  <div class="phead d-flex align-items-center"><svg width="16" height="17"><use href="#part"/></svg>部件导航器<button class="btn ms-auto" aria-label="最大化"><svg width="12" height="11" viewBox="0 0 12 11"><path d="M.500 .500H11.500V10.500H.500ZM.500 1.500H11.500" fill="none" stroke="#000"/></svg></button></div>
  <div class="gridbox flex-grow-1 overflow-hidden">
   <table class="table tree">
    <colgroup><col style="width:199px"><col style="width:24px"><col style="width:24px"><col></colgroup>
    <thead><tr><th>名称 <svg class="d-inline ms-3" width="9" height="6" viewBox="0 0 9 6"><path d="M4.500 0 9 6H0Z"/></svg></th><th>当</th><th>最</th><th>附注</th></tr></thead>
    <tbody id="rows">
     <tr><td><div class="cell"><span class="gd ht"><button class="tg" aria-label="折叠"></button></span><svg class="st" height="16"><use href="#ok"/></svg><svg width="16" height="16" viewBox="0 0 16 16"><path class="ln k" d="M2 12.500H.500V2.500H13.500V4"/><path d="M2.500 4.500H15.500V14.500H2.500Z" fill="#fff" class="k"/><path class="ln k" d="M8.500 14V10.500H15M8.500 12.500H15"/></svg><span class="txt">图纸</span></div></td><td></td><td></td><td></td></tr>
     <tr><td><div class="cell"><span class="gd v"></span><span class="gd ht"><button class="tg" aria-label="折叠"></button></span><svg class="st" height="16"><use href="#ok"/></svg><svg width="16" height="16"><use href="#sheet"/></svg><span class="txt">图纸页 "A3_1" (工作-...</span></div></td><td></td><td class="ok"></td><td></td></tr>
     <tr><td><div class="cell"><span class="gd v"></span><span class="gd v"></span><span class="gd vth"><button class="tg plus" aria-label="展开"></button></span><svg class="st" height="16"><use href="#ok"/></svg><svg width="16" height="16" viewBox="0 0 16 16"><rect x=".500" y=".500" width="15" height="14" fill="#ccc" class="k"/><path d="M4.500 1V15" class="k"/><circle cx="10" cy="9" r="4" fill="#fff" class="k"/></svg><span class="txt">导入的 "Top@5"</span></div></td><td></td><td class="ok"></td><td></td></tr>
     <tr><td><div class="cell"><span class="gd v"></span><span class="gd v"></span><span class="gd vh"></span><svg class="st" height="16"><use href="#ok"/></svg><svg width="16" height="16" viewBox="0 0 16 16"><path class="c" fill="none" stroke-width="1.500" d="M7 2C8 5 11 5 10 8 11 11 8 11 7 14M10 1.500C14 4 14 12 10 14.500"/><path class="o" fill="none" stroke-width="1.500" d="M2 3.500Q5 0 7 4 7 7 6 8 8 12 5 14.500 3 14 2 12M1.500 1V4.500H5M1.500 15V11.500H5"/></svg><span class="txt">表区域 "SX@6" A</span></div></td><td></td><td class="ok"></td><td></td></tr>
     <tr><td><div class="cell"><span class="gd v"></span><span class="gd vh"></span><svg class="st" height="16" viewBox="0 0 16 16"><path d="M4 5C4 0 12 0 12 5 12 8 8.500 8 8.500 11M8.500 13V15.500" fill="none" stroke="#f9ae4b" stroke-width="2"/></svg><svg width="16" height="14" viewBox="0 0 16 14"><path class="ln k" d="M.500 13V1.500H5L6.500 3.500H13V6M.500 12.500 3.500 6H15.500L13 12.500Z"/></svg><span class="txt">过时</span></div></td><td></td><td></td><td></td></tr>
     <tr><td><div class="cell"><span class="gd vth"><button class="tg plus" aria-label="展开"></button></span><svg width="16" height="16" viewBox="0 0 16 16"><path class="ln k" d="M1.500 1.500H14.500V14.500H1.500Z"/><g fill="#fff" class="k"><rect x=".500" y=".500" width="2" height="2"/><rect x="13.500" y=".500" width="2" height="2"/><rect x=".500" y="13.500" width="2" height="2"/><rect x="13.500" y="13.500" width="2" height="2"/></g></svg><span class="txt">组</span></div></td><td></td><td></td><td></td></tr>
     <tr><td><div class="cell"><span class="gd vh"><button class="tg" aria-label="折叠"></button></span><svg class="st" height="16" viewBox="0 0 16 16"><circle cx="8" cy="8" r="6.500" fill="url(#gn)" stroke="#333"/></svg><svg width="16" height="16" viewBox="0 0 16 16"><rect class="ln" stroke="#999" x=".500" y=".500" width="15" height="15"/><rect x="3.500" y="3.500" width="7" height="7" fill="#fff" class="k"/><rect x="6.500" y="6.500" width="7" height="7" class="fo" stroke="#a85a10"/></svg><span class="txt">模型历史记录</span></div></td><td></td><td class="ok"></td><td></td></tr>
     <tr><td><div class="cell"><span class="gd"></span><span class="gd vh"></span><svg class="st" height="12" viewBox="0 0 16 12"><path d="M1 6Q8-2 15 6 8 14 1 6Z" fill="#fff" stroke="#333"/><circle cx="8" cy="6" r="3.300" fill="#222"/></svg><svg width="16" height="16" viewBox="0 0 16 16"><path d="M3 10 10 5 16 11 10 15Z" fill="#777" stroke="#333"/><path class="fo" d="M7 5 12 4 13 9 9 10Z"/><circle cx="5.500" cy="5.500" r="4.500" fill="#fff" stroke="#222" stroke-width="1.500"/><path d="M2.500 8.500 8.500 2.500" stroke="#222" stroke-width="1.500"/></svg><b class="txt">体 (1)</b></div></td><td><svg class="mx-auto" width="9" height="15" viewBox="0 0 9 15"><path class="ln k" d="M1.500 0V15M1.500 2.500H4M1.500 7.500H4M1.500 12.500H4M4.500 .500H7.500V3.500H4.500ZM4.500 11H7.500V14H4.500Z"/><rect x="4" y="5.500" width="4" height="4" class="fo"/></svg></td><td class="ok"></td><td></td></tr>
    </tbody>
   </table>
  </div>
  <div class="hscroll"><div></div></div>
  <div class="splitter mb-0"></div>
  <div class="d-flex flex-column" style="margin-top:2px">
   <button class="btn sect"><svg width="5" height="9" viewBox="0 0 5 9"><path d="M0 0 5 4.500 0 9Z"/></svg>搜索</button>
   <button class="btn sect"><svg width="5" height="9" viewBox="0 0 5 9"><path d="M0 0 5 4.500 0 9Z"/></svg>相关性</button>
   <button class="btn sect"><svg width="5" height="9" viewBox="0 0 5 9"><path d="M0 0 5 4.500 0 9Z"/></svg>细节</button>
   <button class="btn sect"><svg width="5" height="9" viewBox="0 0 5 9"><path d="M0 0 5 4.500 0 9Z"/></svg>预览</button>
  </div>
 </aside>

 <section class="d-flex flex-column flex-grow-1" style="min-width:0;padding-bottom:2px">
  <div class="d-flex"><div class="doctab d-flex align-items-center"><svg width="13" height="14" viewBox="0 0 13 14"><path d="M0 3H12.500M12.500 .500V5" fill="none" stroke="#111" stroke-width="2"/><path d="M1 5H11V13.500H1Z" fill="#bbb"/><circle cx="6.500" cy="9" r="2.500" fill="#006489" stroke="#111"/></svg><span>link_part.prt</span><svg width="10" height="11" viewBox="0 0 10 11"><path fill="none" class="w" stroke-width="1.500" d="M6 1H1V10H8V8M6 1 8 3M5 7 9 3.500"/></svg><button class="btn text-white" aria-label="关闭标签"><svg width="9" height="9" viewBox="0 0 9 9"><path class="w" stroke-width="2" d="M1 1 8 8M8 1 1 8"/></svg></button></div></div>
  <div class="strip"></div>
  <div class="sheet flex-grow-1">
  <svg width="100%" height="100%" viewBox="362 207 1558 800" role="img" aria-label="A3_1">
   <!-- sheet boundary -->
   <g fill="none" stroke-width="2"><path stroke="#bdbdbd" d="M455 211H1564V995"/><path stroke="#c9a3a8" stroke-dasharray="8 8" d="M455 211H1564V995"/></g>
   <path d="M455.500 211V995" stroke="#8d8d8d"/><path d="M454.500 211V995" stroke="#d9aeb0" stroke-dasharray="8 8"/>
   <path d="M455 995.500H1564" stroke="#b99"/><path d="M463 995.500H1564" stroke="#000" stroke-dasharray="8 8"/>
   <!-- frame -->
   <rect x="521" y="224.500" width="1030" height="758" fill="none" stroke="#000" stroke-width="2"/>
   <path d="M521 250.500H669" stroke="#000"/><path d="M668.500 225V250" stroke="#777"/>
   <!-- binding-edge column -->
   <path d="M455 712.500H521M455 731.500H521M455 757.500H521M455 776.500H521M455 821.500H521M455 866.500H521M455 910.500H521M455 937.500H521M455 955.500H521M455 982.500H521" stroke="#888"/>
   <path d="M455 802.500H521M455 847.500H521M455 892.500H521" stroke="#000"/>
   <g class="cad" font-size="11"><text x="488" y="726">借通用件登记</text><text x="476" y="771">描</text><text x="500" y="771">图</text><text x="476" y="816">校</text><text x="500" y="816">描</text><text x="488" y="861">旧底图总号</text><text x="476" y="906">签</text><text x="500" y="906">字</text><text x="476" y="950">日</text><text x="500" y="950">期</text></g>
   <!-- surface finish note -->
   <g class="cad" font-size="11"><text x="1428" y="341">其</text><text x="1439" y="341">余</text></g>
   <path d="M1461 330.500H1445L1452.500 343.500 1469 315" fill="none" stroke="#222"/>
   <text x="982" y="388" text-anchor="middle" font-family="Liberation Mono, monospace" font-size="17" fill="#555">SECTION A-A</text>
   <!-- section A-A -->
   <path fill="url(#hat)" fill-rule="evenodd" d="M589 454H781L784 451V421H865V451L868 454H1098L1101 451V421H1182V451L1185 454H1377L1381 458V488L1377 492H1185L1182 495V526H1101V495L1098 492H868L865 495V526H784V495L781 492H589L585 488V458ZM595 454V492H611V454ZM1355 454V492H1371V454ZM801 421V442H806V526H843V442H848V421ZM1118 421V442H1123V526H1160V442H1165V421Z"/>
   <g fill="none" stroke="#000" stroke-width="1.500"><path d="M589 454.500H780Q784 454.500 784 450V421H865V450Q865 454.500 869 454.500H1097Q1101 454.500 1101 450V421H1182V450Q1182 454.500 1186 454.500H1377Q1381 455 1381 459V488Q1381 492 1377 492.500H1186Q1182 492.500 1182 497V526.500H1101V497Q1101 492.500 1097 492.500H869Q865 492.500 865 497V526.500H784V497Q784 492.500 780 492.500H589Q585.500 492 585.500 488V459Q585.500 455 589 454.500Z"/>
   <path d="M595 454V492M611 454V492M1355.500 454V492M1371.500 454V492M806 442V526M843 442V526M1123 442V526M1160 442V526M1355 491H1371"/>
   <path stroke-width="1" d="M799 421 801 423.500V441.500H848.500V423.500L850 421M801 423.500H848M1116 421 1117.500 423.500V441.500H1165.500V423.500L1167 421M1118 423.500H1165M804 526 806 523.500H843L845 526M1121 526 1123 523.500H1160L1162 526"/></g>
   <path d="M800 422.500H850M1117 422.500H1167M806 525H843M1123 525H1160" stroke="#888"/>
   <!-- plan view -->
   <g fill="none" stroke="#000" stroke-width="1.500">
    <circle cx="874" cy="723.500" r="40.500"/><circle cx="874" cy="723.500" r="18"/><circle cx="1190.500" cy="723.500" r="40.500"/><circle cx="1190.500" cy="723.500" r="18"/>
    <g stroke-width="1.200"><circle cx="874" cy="723.500" r="26"/><circle cx="874" cy="723.500" r="24"/><circle cx="1190.500" cy="723.500" r="26"/><circle cx="1190.500" cy="723.500" r="24"/></g>
    <circle cx="691.500" cy="849.500" r="7.500"/><circle cx="1372.500" cy="597.500" r="7.500"/>
    <path d="M842 698 681 835.500A17.500 17.500 0 0 0 700 864.500L883 764"/><path d="M1223 749 1383 611.500A17.500 17.500 0 0 0 1364 582.500L1181 684"/>
    <path stroke-width="2" d="M880 684H1184M882 763H1184"/>
    <path stroke-width="2" d="M861 732 873 724H890M1203 715 1191.500 724H1174"/>
    <path stroke-width="2" d="M655.500 874.500 668.500 866M1409 572 1396 581"/>
   </g>
   <g fill="none" stroke="#666"><path d="M820 723.500H865M868 723.500H880M883 723.500H928M873.500 670V715M873.500 718V729M873.500 732V777M1137 723.500H1182M1185 723.500H1197M1200 723.500H1244M671 849.500H684M688 849.500H695M699 849.500H713M691.500 828V842M691.500 846V853M691.500 857V870M1352 597.500H1365M1369 597.500H1376M1380 597.500H1393"/>
   <path stroke="#000" d="M1190.500 670V715M1190.500 718V729M1190.500 732V777M1372.500 577V590M1372.500 594V601M1372.500 605V618"/>
   <path stroke="#333" stroke-width=".800" d="M625.500 832 655.500 874.500M1379 529.500 1409 572"/></g>
   <path d="M625 831.500 632 838.500 630 840ZM1379 529 1385.500 536.500 1383.500 538Z"/>
   <g font-family="Lato, Open Sans, sans-serif" font-weight="300" font-size="18" text-anchor="middle" fill="#222"><text x="670" y="903">A</text><text x="1423" y="600">A</text></g>
   <text x="370" y="1003" font-family="Liberation Sans, sans-serif" font-size="13">"A3_1"</text>
   <!-- title block -->
   <g fill="none" stroke="#000"><path stroke-width="2" d="M1075 863.500H1551M1075.500 863V983M1115 863V983M1168 863V983M1234 863V983M1551.500 863V983M1234 932H1551M1075 982H1551"/>
   <path stroke-width="1.500" d="M1097 863V930M1207.500 863V930M1392.500 863V983M1075 916.500H1234M1075 929.500H1234M1075 876.500H1234M1075 942.500H1234M1392 897.500H1551M1392 911H1551M1392 945.500H1551M1472.500 897V945M1511.500 897V932M1413.500 911V932M1434.500 911V932M1453.500 911V932"/>
   <path stroke="#888" d="M1076 889.500H1234M1076 902.500H1234M1076 955.500H1234M1076 968.500H1234"/></g>
   <g class="cad" font-size="7" style="font-weight:700"><text x="1086" y="926">标记</text><text x="1106" y="926">处数</text><text x="1141" y="926">更改文件号</text><text x="1182" y="926">签</text><text x="1194" y="926">字</text><text x="1221" y="926">日期</text>
   <text x="1090" y="939">设</text><text x="1101" y="939">计</text><text x="1090" y="952">校</text><text x="1101" y="952">对</text><text x="1090" y="965">审</text><text x="1101" y="965">核</text><text x="1090" y="979">批</text><text x="1101" y="979">准</text>
   <text x="1433" y="907">图样标记</text><text x="1486" y="907">重</text><text x="1497" y="907">量</text><text x="1525" y="907">比</text><text x="1537" y="907">例</text><text x="1420" y="941">共</text><text x="1445" y="941">页</text><text x="1499" y="941">第</text><text x="1524" y="941">页</text></g>
   <text class="cad" font-size="8" x="1472" y="967">西门子产品管理软件（上海）有限公司</text>
   <!-- selection tag -->
   <g><rect x="1555.500" y="488.500" width="86" height="20" fill="#fff" fill-opacity=".85" stroke="#bcbcbc"/><g opacity=".6"><use href="#sheet" x="1557" y="490" width="16" height="16"/></g><text x="1578" y="503" font-size="12" fill="#666">片体 : A3_1</text></g>
  </svg>
  </div>
 </section>
</main>

<footer class="status">
 选择对象并使用 MB3，或双击，或按住并拖动来移动视图、尺寸或注释
 <span class="mid">片体 : A3_1</span>
 <div class="ime d-flex align-items-center">
  <svg class="imelogo" width="32" height="32" viewBox="0 0 32 32"><path d="M4 4 25 1Q28 1 29 4L31 25Q31 28 28 29L10 31Q6 31 5 28L1 8Q1 5 4 4Z" fill="#f4511e"/><path d="M23 9Q12 6 10 11 10 14 16 15.500 23 17 22 21 19 25 9 22" fill="none" stroke="#fff" stroke-width="3.600"/></svg>
  <button class="btn fw-bold" style="font-size:14px">英</button>
  <button class="btn" aria-label="标点"><svg width="14" height="14" viewBox="0 0 14 14" fill="currentColor"><circle cx="3" cy="4" r="2"/><path d="M9 6H13V10L10 13 11 10H9Z"/></svg></button>
  <button class="btn" aria-label="语音输入"><svg width="14" height="16" viewBox="0 0 14 16"><rect x="4" y="0" width="6" height="10" rx="3" fill="currentColor"/><path d="M1.500 7A5.500 5.500 0 0 0 12.500 7M7 12.500V16M4 15H10" fill="none" stroke="currentColor" stroke-width="1.800"/></svg></button>
  <button class="btn" aria-label="键盘"><svg width="16" height="13" viewBox="0 0 16 13"><rect x="1" y="1" width="14" height="11" rx="1" fill="none" stroke="currentColor" stroke-width="1.800"/><path d="M3.500 4.500H12.500M3.500 7H12.500" stroke="currentColor" stroke-width="1.500" stroke-dasharray="1.800 1"/><path d="M5 9.500H11" stroke="currentColor" stroke-width="1.300"/></svg></button>
  <button class="btn" aria-label="皮肤"><svg class="mb-1" width="19" height="19" viewBox="0 0 19 19"><path d="M4 5H6Q8 7 10 5H12L15 8 13 11 12 10V18H4V10L3 11 0 8Z" fill="url(#pk)"/><circle cx="15" cy="4" r="3" fill="#ff5126"/></svg></button>
  <button class="btn" aria-label="游戏"><svg width="16" height="15" viewBox="0 0 16 15"><path d="M4 1.500H12Q15 1.500 15 5V8Q15 10 13 10H3Q1 10 1 8V5Q1 1.500 4 1.500Z" fill="currentColor"/><path d="M3 5.500H7M5 3.500V7.500M10 4.500H11.500M11.500 7H13" stroke="#fff" stroke-width="1.300"/><path d="M1 14 4.500 10.500M15 14 11.500 10.500" stroke="currentColor" stroke-width="2"/></svg></button>
  <button class="btn" aria-label="工具箱"><svg width="14" height="14" viewBox="0 0 14 14" fill="currentColor"><rect width="6" height="6" rx="1"/><circle cx="10.500" cy="3" r="2.200" fill="none" stroke="currentColor" stroke-width="1.600"/><rect y="7.500" width="6" height="6" rx="1"/><rect x="7.500" y="7.500" width="6" height="6" rx="1"/></svg></button>
  <button class="btn" aria-label="输入法设置"><svg width="14" height="14" viewBox="0 0 14 14"><path d="M7 0 9 2.500 13 2.500 12 6 14 9 10.500 11 8.500 14H5.500L3.500 11 0 9 2 6 1 2.500H5Z" fill="currentColor"/><path d="M7 12V7M5 6.500H9" stroke="#fff" stroke-width="1.500"/></svg></button>
 </div>
 <div class="wm">CSDN @山涧果子</div>
</footer>
<script>
// checkmarks of the "up to date" column, then blank filler rows
document.querySelectorAll('td.ok').forEach(function (c) {
  c.innerHTML = '<svg class="mx-auto" width="16" height="16"><use href="#ok"/></svg>';
});
var body = document.getElementById('rows');
while (body.rows.length < 33) {
  body.insertAdjacentHTML('beforeend', '<tr><td></td><td></td><td></td><td></td></tr>');
}
</script>
</body>
</html>
